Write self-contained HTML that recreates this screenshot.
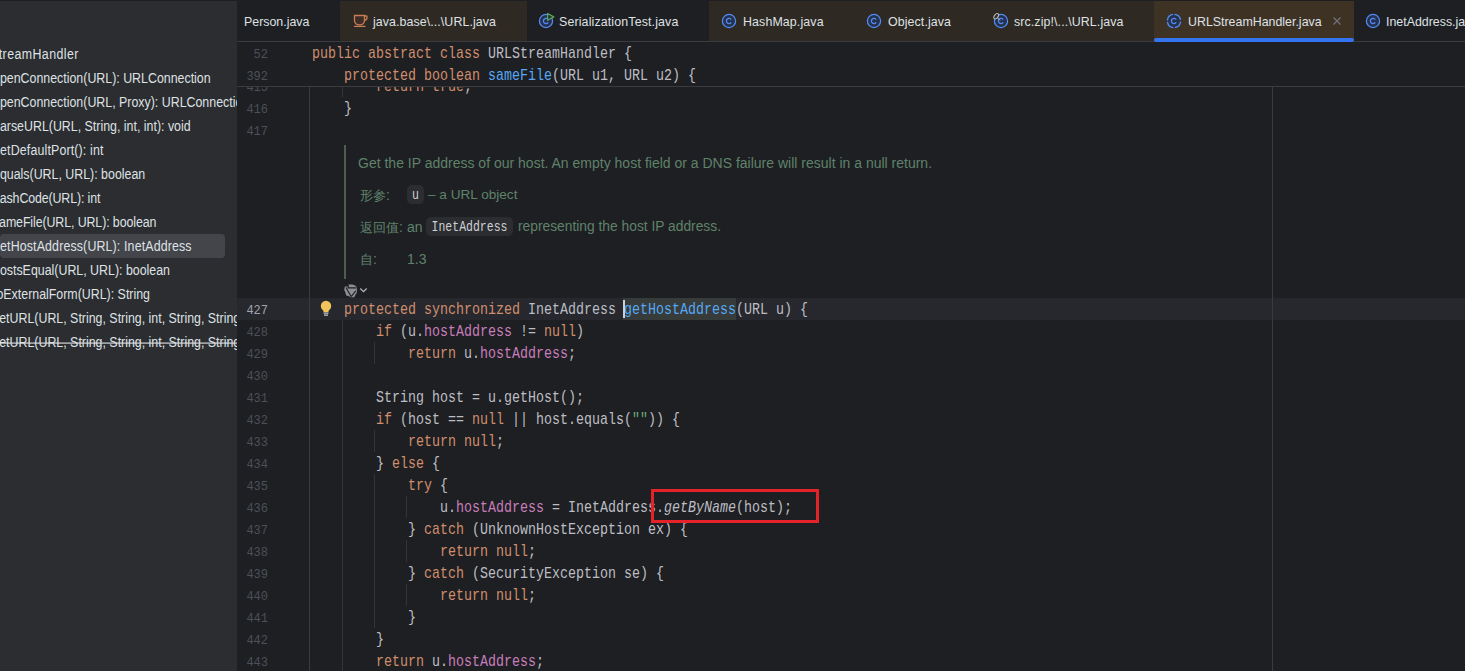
<!DOCTYPE html>
<html><head><meta charset="utf-8">
<style>
*{margin:0;padding:0;box-sizing:border-box}
html,body{width:1465px;height:671px;overflow:hidden;background:#1E1F22}
body{position:relative;font-family:"Liberation Sans",sans-serif}
.a{position:absolute;white-space:pre}
#left{position:absolute;left:0;top:0;width:237px;height:671px;background:#2B2D30;overflow:hidden}
#left .it{position:absolute;white-space:pre;font-size:12.4px;color:#DFE1E5;line-height:16px;padding-top:1px;transform:scaleY(1.12);transform-origin:0 13px}
#tabs{position:absolute;left:237px;top:0;width:1228px;height:42px;background:#1E1F22;overflow:hidden}
.tab{position:absolute;top:1px;height:40px}
.tt{position:absolute;white-space:pre;font-size:12.4px;color:#DFE1E5;line-height:16px;top:13px;padding-top:1px;transform:scaleY(1.1);transform-origin:0 13px}
.code{position:absolute;white-space:pre;font-family:"Liberation Mono",monospace;font-size:13.33px;color:#BCBEC4;line-height:22px;height:22px;padding-top:2px;transform:scaleY(1.2);transform-origin:0 16px}
.ln{position:absolute;white-space:pre;font-family:"Liberation Mono",monospace;font-size:12px;color:#4B5059;line-height:22px;height:22px;text-align:right;width:60px;left:208px;padding-top:2px;transform:scaleY(1.12);transform-origin:0 16px}
.k{color:#CF8E6D}.f{color:#56A8F5}.p{color:#C77DBB}.s{color:#6AAB73}.i{font-style:italic}
.g{position:absolute;width:1px;background:#313438}
.doc{position:absolute;white-space:pre;font-size:14px;color:#5F826B;line-height:16px}
.chip{position:absolute;background:#2B2D30;border-radius:5px;font-family:"Liberation Mono",monospace;font-size:11.5px;color:#CED0D6;line-height:19px;text-align:center}
.chip span{display:inline-block;transform:scaleY(1.2);transform-origin:0 14px;line-height:19px;padding-top:1px}
.cj{font-size:13.2px}
</style></head><body>

<!-- editor area -->
<div id="editor">
  <!-- caret row -->
  <div class="a" style="left:237px;top:298px;width:1228px;height:22px;background:#26282E"></div>
  <!-- right margin -->
  <div class="g" style="left:1272px;top:86px;height:585px;background:#393B40"></div>
  <!-- indent guides -->
  <div class="g" style="left:309px;top:86px;height:585px;background:#393B40"></div>
  <div class="g" style="left:342px;top:86px;height:11px"></div>
  <div class="g" style="left:342px;top:320px;height:351px"></div>
  <div class="g" style="left:374px;top:342px;height:22px"></div>
  <div class="g" style="left:374px;top:430px;height:22px"></div>
  <div class="g" style="left:374px;top:474px;height:154px"></div>
  <div class="g" style="left:406px;top:496px;height:22px"></div>
  <div class="g" style="left:406px;top:540px;height:22px"></div>
  <div class="g" style="left:406px;top:584px;height:22px"></div>

  <!-- line 415,416,417 -->
  <div class="ln" style="top:75px">415</div><div class="code" style="left:312px;top:75px">        <span class="k">return true</span>;</div>
  <div class="ln" style="top:97px">416</div><div class="code" style="left:312px;top:97px">    }</div>
  <div class="ln" style="top:119px">417</div>

  <!-- doc block -->
  <div class="a" style="left:344px;top:145px;width:2px;height:134px;background:#4C5E4F"></div>
  <div class="doc" style="left:358px;top:155px">Get the IP address of our host. An empty host field or a DNS failure will result in a null return.</div>
  <div class="doc" style="left:360px;top:187px"><span class="cj">形参</span>:</div>
  <div class="chip" style="left:407px;top:185px;width:17px;height:19px"><span>u</span></div>
  <div class="doc" style="left:428px;top:187px;font-size:13.6px">– a URL object</div>
  <div class="doc" style="left:360px;top:219px"><span class="cj">返回值</span>:</div>
  <div class="doc" style="left:407px;top:219px">an</div>
  <div class="chip" style="left:426px;top:217px;width:87px;height:19px"><span>InetAddress</span></div>
  <div class="doc" style="left:518px;top:219px;font-size:13.8px">representing the host IP address.</div>
  <div class="doc" style="left:360px;top:251px"><span class="cj">自</span>:</div>
  <div class="doc" style="left:407px;top:251px">1.3</div>
  <!-- inlay icon -->
  <svg class="a" style="left:344px;top:284px" width="26" height="14" viewBox="0 0 26 14">
    <path d="M4.2 0.4 L8.5 0.4 L11.6 1.8 L12.8 3.8 L12.9 8.6 L11.2 11.2 L10.3 13.2 L6.8 13.2 L5 12.2 L2.2 11.4 L1.3 8.2 L0.2 6 L0.8 2.6 L4.2 2.6 Z" fill="#8C8E93"/>
    <path d="M4.2 0.6 V3.9 H12.2 M2 3.6 L7.1 12.6 M11.8 6.8 L7.1 12.6" fill="none" stroke="#1E1F22" stroke-width="1.1" stroke-linejoin="round"/>
    <path d="M16.3 4.5 L19.5 7.7 L22.7 4.5" fill="none" stroke="#B0B2B8" stroke-width="1.3"/>
  </svg>

  <!-- lines 427..443 -->
  <div class="ln" style="top:298px;color:#A1A3AB">427</div>
  <div class="a" style="left:623px;top:298px;width:113px;height:22px;background:#373B39"></div>
  <div class="code" style="left:312px;top:298px">    <span class="k">protected synchronized</span> InetAddress <span class="f">getHostAddress</span>(URL u) {</div>
  <div class="a" style="left:623px;top:300px;width:2px;height:18px;background:#CED0D6"></div>
  <!-- bulb -->
  <svg class="a" style="left:319px;top:300px" width="14" height="17" viewBox="0 0 14 17">
    <circle cx="7" cy="6" r="5.2" fill="#F2C55C"/>
    <rect x="4.5" y="8" width="5" height="4" fill="#F2C55C"/>
    <rect x="4.5" y="12.5" width="5" height="1.2" fill="#CED0D6"/>
    <rect x="5" y="14.5" width="4" height="1.2" fill="#CED0D6"/>
  </svg>

  <div class="ln" style="top:320px">428</div><div class="code" style="left:312px;top:320px">        <span class="k">if</span> (u.<span class="p">hostAddress</span> != <span class="k">null</span>)</div>
  <div class="ln" style="top:342px">429</div><div class="code" style="left:312px;top:342px">            <span class="k">return</span> u.<span class="p">hostAddress</span>;</div>
  <div class="ln" style="top:364px">430</div>
  <div class="ln" style="top:386px">431</div><div class="code" style="left:312px;top:386px">        String host = u.getHost();</div>
  <div class="ln" style="top:408px">432</div><div class="code" style="left:312px;top:408px">        <span class="k">if</span> (host == <span class="k">null</span> || host.equals(<span class="s">""</span>)) {</div>
  <div class="ln" style="top:430px">433</div><div class="code" style="left:312px;top:430px">            <span class="k">return null</span>;</div>
  <div class="ln" style="top:452px">434</div><div class="code" style="left:312px;top:452px">        } <span class="k">else</span> {</div>
  <div class="ln" style="top:474px">435</div><div class="code" style="left:312px;top:474px">            <span class="k">try</span> {</div>
  <div class="ln" style="top:496px">436</div><div class="code" style="left:312px;top:496px">                u.<span class="p">hostAddress</span> = InetAddress.<span class="i">getByName</span>(host);</div>
  <div class="ln" style="top:518px">437</div><div class="code" style="left:312px;top:518px">            } <span class="k">catch</span> (UnknownHostException ex) {</div>
  <div class="ln" style="top:540px">438</div><div class="code" style="left:312px;top:540px">                <span class="k">return null</span>;</div>
  <div class="ln" style="top:562px">439</div><div class="code" style="left:312px;top:562px">            } <span class="k">catch</span> (SecurityException se) {</div>
  <div class="ln" style="top:584px">440</div><div class="code" style="left:312px;top:584px">                <span class="k">return null</span>;</div>
  <div class="ln" style="top:606px">441</div><div class="code" style="left:312px;top:606px">            }</div>
  <div class="ln" style="top:628px">442</div><div class="code" style="left:312px;top:628px">        }</div>
  <div class="ln" style="top:650px">443</div><div class="code" style="left:312px;top:650px">        <span class="k">return</span> u.<span class="p">hostAddress</span>;</div>

  <!-- sticky header -->
  <div class="a" style="left:237px;top:42px;width:1228px;height:44px;background:#1E1F22"></div>
  <div class="a" style="left:237px;top:86px;width:1228px;height:1px;background:#393B40"></div>
  <div class="ln" style="top:42px">52</div><div class="code" style="left:312px;top:42px"><span class="k">public abstract class</span> URLStreamHandler {</div>
  <div class="ln" style="top:64px">392</div><div class="code" style="left:312px;top:64px">    <span class="k">protected boolean</span> <span class="f">sameFile</span>(URL u1, URL u2) {</div>

  <!-- red box -->
  <div class="a" style="left:651px;top:489px;width:168px;height:34px;border:3px solid #E52228"></div>
</div>

<!-- tabs -->

<div id="tabs">
    <div class="a" style="left:0;top:41px;width:1228px;height:1px;background:#393B40"></div>
  <div class="tt" style="left:7px">Person.java</div>
  <div class="tab" style="left:103px;width:187px;background:#2E2922"></div>
  <svg class="a" style="left:115px;top:13px" width="17" height="16" viewBox="0 0 17 16">
    <path d="M2.5 2.5 H12.5 V7.6 A5 4.3 0 0 1 2.5 7.6 Z" fill="#3E2D24" stroke="#C77D55" stroke-width="1.3"/>
    <path d="M12.5 3 H14.2 A0.8 0.8 0 0 1 15 3.8 V5 A2 2 0 0 1 12.5 7" fill="none" stroke="#C77D55" stroke-width="1.3"/>
    <path d="M2 13.4 H13.5" stroke="#C77D55" stroke-width="1.3"/>
  </svg>
  <div class="tt" style="left:136px;letter-spacing:0.08px">java.base\...\URL.java</div>
  <svg class="a" style="left:301px;top:13px" width="19" height="17" viewBox="0 0 19 17">
    <circle cx="8" cy="8" r="6.6" fill="#25324D" stroke="#548AF7" stroke-width="1.25"/><path d="M10.2 6.6 A2.6 2.6 0 1 0 10.2 9.4" fill="none" stroke="#548AF7" stroke-width="1.25"/>
    <path d="M9.6 0.5 L15.8 3.9 L9.6 7.3 Z" fill="#27352A" stroke="#57A85F" stroke-width="1.2" stroke-linejoin="round"/>
  </svg>
  <div class="tt" style="left:322px;letter-spacing:0.14px">SerializationTest.java</div>
  <div class="tab" style="left:472px;width:445px;background:#2E2922"></div>
  <svg class="a" style="left:484px;top:13px" width="16" height="16" viewBox="0 0 16 16"><circle cx="8" cy="8" r="6.6" fill="#25324D" stroke="#548AF7" stroke-width="1.25"/><path d="M10.2 6.6 A2.6 2.6 0 1 0 10.2 9.4" fill="none" stroke="#548AF7" stroke-width="1.25"/></svg>
  <div class="tt" style="left:506px;letter-spacing:0.12px">HashMap.java</div>
  <svg class="a" style="left:629px;top:13px" width="16" height="16" viewBox="0 0 16 16"><circle cx="8" cy="8" r="6.6" fill="#25324D" stroke="#548AF7" stroke-width="1.25"/><path d="M10.2 6.6 A2.6 2.6 0 1 0 10.2 9.4" fill="none" stroke="#548AF7" stroke-width="1.25"/></svg>
  <div class="tt" style="left:651px;letter-spacing:0.1px">Object.java</div>
  <svg class="a" style="left:755px;top:12px" width="18" height="17" viewBox="0 0 18 17">
    <g transform="translate(1 1)"><circle cx="8" cy="8" r="6.6" fill="#25324D" stroke="#548AF7" stroke-width="1.25"/><path d="M10.2 6.6 A2.6 2.6 0 1 0 10.2 9.4" fill="none" stroke="#548AF7" stroke-width="1.25"/></g>
    <path d="M5.5 5.8 L8 8.3" stroke="#B7B9BE" stroke-width="1"/>
    <ellipse cx="4.2" cy="4.2" rx="3.1" ry="1.8" transform="rotate(-50 4.2 4.2)" fill="#2E2922" stroke="#B7B9BE" stroke-width="1.1"/>
  </svg>
  <div class="tt" style="left:777px;letter-spacing:0.1px">src.zip!\...\URL.java</div>
  <div class="tab" style="left:917px;width:200px;background:#3E3225"></div>
  <div class="a" style="left:917px;top:38px;width:200px;height:4px;background:#3574F0;border-radius:2px"></div>
  <svg class="a" style="left:929px;top:13px" width="16" height="16" viewBox="0 0 16 16">
    <circle cx="8" cy="8" r="6.6" fill="#25324D" stroke="#548AF7" stroke-width="1.3" stroke-dasharray="8.8 1.4" stroke-dashoffset="-0.7"/>
    <path d="M10.2 6.6 A2.6 2.6 0 1 0 10.2 9.4" fill="none" stroke="#548AF7" stroke-width="1.25"/>
  </svg>
  <div class="tt" style="left:951px">URLStreamHandler.java</div>
  <svg class="a" style="left:1095px;top:16px" width="10" height="10" viewBox="0 0 10 10"><path d="M1.5 1.5 L8.5 8.5 M8.5 1.5 L1.5 8.5" stroke="#6F737A" stroke-width="1.2"/></svg>
  <svg class="a" style="left:1128px;top:13px" width="16" height="16" viewBox="0 0 16 16"><circle cx="8" cy="8" r="6.6" fill="#25324D" stroke="#548AF7" stroke-width="1.25"/><path d="M10.2 6.6 A2.6 2.6 0 1 0 10.2 9.4" fill="none" stroke="#548AF7" stroke-width="1.25"/></svg>
  <div class="tt" style="left:1149px">InetAddress.java</div>
</div>

<!-- left panel -->
<div id="left">
  <div class="a" style="left:0;top:0;width:237px;height:1px;background:#1E1F22"></div>
  <div class="a" style="left:0;top:234px;width:225px;height:24px;background:#43454A;border-radius:4px"></div>
  <div class="it" style="left:-36px;top:46px;letter-spacing:0.42px">URLStreamHandler</div>
  <div class="it" style="left:-7px;top:70px">openConnection(URL): URLConnection</div>
  <div class="it" style="left:-7px;top:94px">openConnection(URL, Proxy): URLConnection</div>
  <div class="it" style="left:-7px;top:118px">parseURL(URL, String, int, int): void</div>
  <div class="it" style="left:-7px;top:142px;letter-spacing:0.15px">getDefaultPort(): int</div>
  <div class="it" style="left:-7px;top:166px">equals(URL, URL): boolean</div>
  <div class="it" style="left:-7px;top:190px;letter-spacing:-0.12px">hashCode(URL): int</div>
  <div class="it" style="left:-7px;top:214px;letter-spacing:-0.1px">sameFile(URL, URL): boolean</div>
  <div class="it" style="left:-7px;top:238px;letter-spacing:0.14px">getHostAddress(URL): InetAddress</div>
  <div class="it" style="left:-7px;top:262px">hostsEqual(URL, URL): boolean</div>
  <div class="it" style="left:-7px;top:286px">toExternalForm(URL): String</div>
  <div class="it" style="left:-7px;top:310px">setURL(URL, String, String, int, String, String)</div>
  <div class="it" style="left:-7px;top:334px;text-decoration:line-through">setURL(URL, String, String, int, String, String)</div>
</div>
</body></html>
